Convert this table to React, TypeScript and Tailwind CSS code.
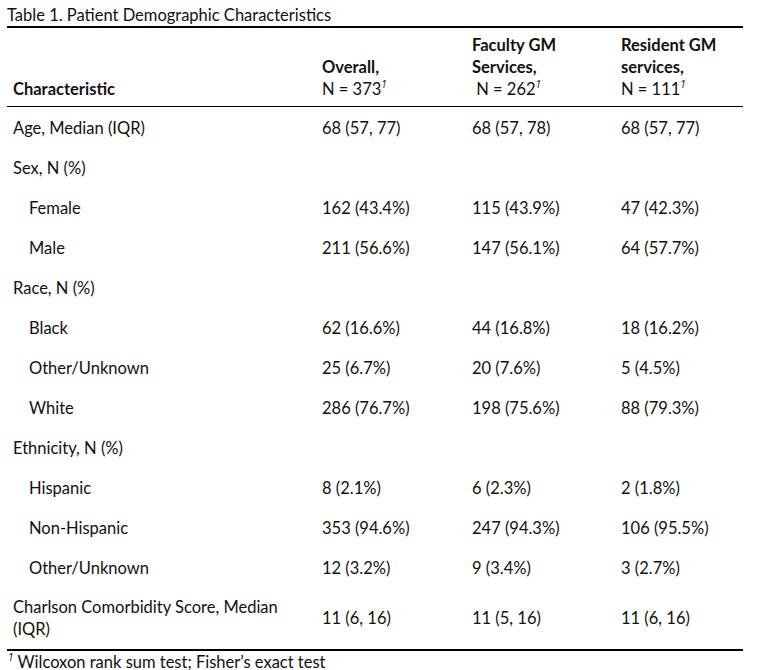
import React from "react";

type Row = {
  label: string;
  indent?: boolean;
  values?: [string, string, string];
};

const rows: Row[] = [
  { label: "Age, Median (IQR)", values: ["68 (57, 77)", "68 (57, 78)", "68 (57, 77)"] },
  { label: "Sex, N (%)" },
  { label: "Female", indent: true, values: ["162 (43.4%)", "115 (43.9%)", "47 (42.3%)"] },
  { label: "Male", indent: true, values: ["211 (56.6%)", "147 (56.1%)", "64 (57.7%)"] },
  { label: "Race, N (%)" },
  { label: "Black", indent: true, values: ["62 (16.6%)", "44 (16.8%)", "18 (16.2%)"] },
  { label: "Other/Unknown", indent: true, values: ["25 (6.7%)", "20 (7.6%)", "5 (4.5%)"] },
  { label: "White", indent: true, values: ["286 (76.7%)", "198 (75.6%)", "88 (79.3%)"] },
  { label: "Ethnicity, N (%)" },
  { label: "Hispanic", indent: true, values: ["8 (2.1%)", "6 (2.3%)", "2 (1.8%)"] },
  { label: "Non-Hispanic", indent: true, values: ["353 (94.6%)", "247 (94.3%)", "106 (95.5%)"] },
  { label: "Other/Unknown", indent: true, values: ["12 (3.2%)", "9 (3.4%)", "3 (2.7%)"] },
];

const Sup = () => (
  <sup className="italic text-[10px] -top-[0.7em] font-['Open_Sans',sans-serif]">1</sup>
);

const gridCols = "grid grid-cols-[309px_150px_149px_128px]";

const App: React.FC = () => {
  return (
    <div className="w-[760px] h-[670px] overflow-hidden bg-white text-[#111] font-['Lato',sans-serif] text-[16.5px]">
      <div className="ml-[7px] w-[736px]">
        <div className="h-[26px] pt-[5px] leading-[20px]">Table 1. Patient Demographic Characteristics</div>
        <div className="border-t-2 border-black" />

        {/* header */}
        <div className={`${gridCols} border-b border-black pt-[6px] pb-[6px] leading-[22px]`}>
          <div className="pl-[6px] flex flex-col justify-end font-bold">Characteristic</div>
          <div className="pl-[6px] flex flex-col justify-end">
            <span className="font-bold">Overall,</span>
            <span>N = 373<Sup /></span>
          </div>
          <div className="pl-[6px] flex flex-col justify-end">
            <span className="font-bold">Faculty GM</span>
            <span className="font-bold">Services,</span>
            <span>&nbsp;N = 262<Sup /></span>
          </div>
          <div className="pl-[6px] flex flex-col justify-end">
            <span className="font-bold">Resident GM</span>
            <span className="font-bold">services,</span>
            <span>N = 111<Sup /></span>
          </div>
        </div>

        {/* body */}
        {rows.map((r, i) => (
          <div key={i} className={`${gridCols} h-[40px] pt-[2px] items-center`}>
            <div className={r.indent ? "pl-[22px]" : "pl-[6px]"}>{r.label}</div>
            {r.values ? (
              r.values.map((v, j) => (
                <div key={j} className="pl-[6px]">
                  {v}
                </div>
              ))
            ) : (
              <>
                <div />
                <div />
                <div />
              </>
            )}
          </div>
        ))}
        <div className={`${gridCols} h-[62px] items-center leading-[22px]`}>
          <div className="pl-[6px] pr-[20px]">Charlson Comorbidity Score, Median (IQR)</div>
          <div className="pl-[6px]">11 (6, 16)</div>
          <div className="pl-[6px]">11 (5, 16)</div>
          <div className="pl-[6px]">11 (6, 16)</div>
        </div>
        <div className="border-t-2 border-black" />
        <div className="pl-[1px] pt-[1px] leading-[20px]">
          <Sup /> Wilcoxon rank sum test; Fisher’s exact test
        </div>
      </div>
    </div>
  );
};

export default App;
